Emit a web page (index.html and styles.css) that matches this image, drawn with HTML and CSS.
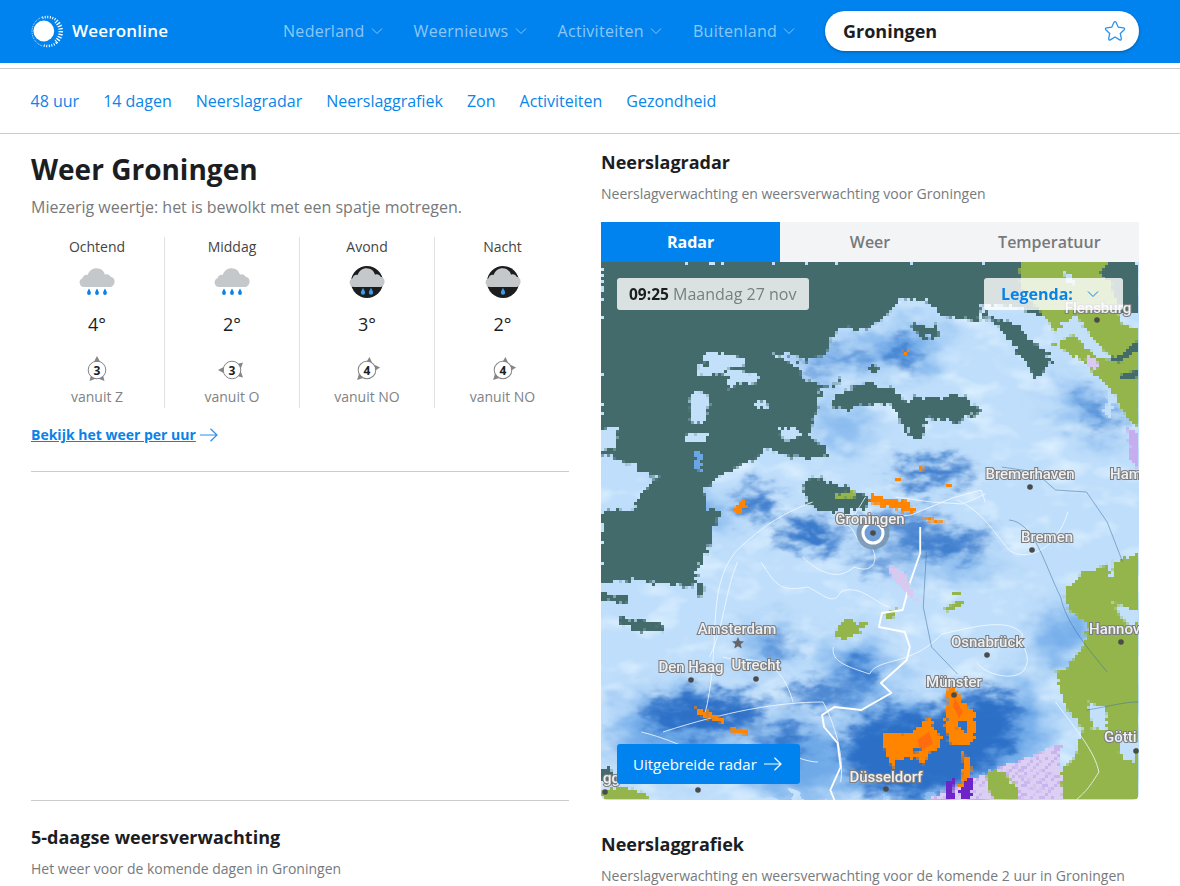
FILE: index.html
```html
<!DOCTYPE html>
<html lang="nl">
<head>
<meta charset="utf-8">
<title>Weer Groningen - Weeronline</title>
<link rel="stylesheet" href="styles.css">
</head>
<body>
<svg class="defs" width="0" height="0" aria-hidden="true">
  <defs>
    <symbol id="chev" viewBox="0 0 12 8"><path d="M1 1.500 6 6.500 11 1.500" fill="none" stroke="currentColor" stroke-width="1"/></symbol>
    <symbol id="arrow" viewBox="0 0 18 14"><path d="M0 7H17M10.500 .8 17 7 10.500 13.200" fill="none" stroke="currentColor" stroke-width="1.200"/></symbol>
    <path id="cloud" d="M5 287a4.500 4.500 0 0 1-1.500-8.700c.6-2.600 2.800-4 5.200-3.400C10 271 13.500 268.300 17.500 268.300c4.300 0 7.700 2.800 8.500 6.500 2-1 4.700-.2 5.600 2 2.300.3 4 2 4 4.600 0 3-2.200 5.600-5 5.600z" transform="translate(0 -263)" fill="#c5c8ca"/>
    <path id="drop" d="M0-3.500C1 -1.500 1.900-.4 1.900 1A1.900 1.900 0 0 1-1.900 1C-1.900-.4-1-1.500 0-3.500z" fill="#0a82e6"/>
    <path id="dropl" d="M0-3.800C1 -1.500 2.100-.4 2.100 1.200A2.100 2.100 0 0 1-2.100 1.200C-2.100-.4-1-1.500 0-3.800z" fill="#3d9bec"/>
    <symbol id="rain3" viewBox="0 0 36 36"><use href="#cloud"/><use href="#drop" x="10" y="29"/><use href="#drop" x="18" y="29"/><use href="#drop" x="26" y="29"/></symbol>
    <symbol id="night2" viewBox="0 0 36 36"><circle cx="18" cy="19" r="16" fill="#1c1d1f"/><use href="#cloud"/><use href="#dropl" x="14" y="28.500"/><use href="#dropl" x="22" y="28.500"/></symbol>
    <symbol id="night1" viewBox="0 0 36 36"><circle cx="18" cy="19" r="16" fill="#1c1d1f"/><use href="#cloud"/><use href="#dropl" x="18" y="28.500"/></symbol>
    <g id="wind"><circle r="8.800" fill="#fff" stroke="#858585" stroke-width="1"/><path d="M-3-8.300 0-14 3-8.300zM-7.500 11-6.200 6-1.500 8.800zM7.500 11 6.200 6 1.500 8.800z" fill="#858585"/></g>
    <pattern id="hatch" width="7" height="7" patternUnits="userSpaceOnUse" patternTransform="rotate(-40)">
      <rect width="7" height="7" fill="#dccff4"/><rect width="7" height="2" fill="#c9b4ee"/>
    </pattern>
    <filter id="rough" filterUnits="userSpaceOnUse" x="0" y="0" width="538" height="538" color-interpolation-filters="sRGB">
      <feTurbulence type="fractalNoise" baseFrequency=".16" numOctaves="2" seed="4" result="n"/>
      <feDisplacementMap in="SourceGraphic" in2="n" scale="11" xChannelSelector="R" yChannelSelector="G" result="d"/>
      <feFlood x="1" y="1" width="1" height="1" flood-color="#000"/>
      <feComposite x="0" y="0" width="3" height="3" operator="over"/>
      <feTile x="0" y="0" width="538" height="538" result="t"/>
      <feComposite in="d" in2="t" operator="in"/>
      <feMorphology operator="dilate" radius="1"/>
    </filter>
    <filter id="rough2" filterUnits="userSpaceOnUse" x="0" y="0" width="538" height="538" color-interpolation-filters="sRGB">
      <feTurbulence type="fractalNoise" baseFrequency=".3" numOctaves="2" seed="9" result="n"/>
      <feDisplacementMap in="SourceGraphic" in2="n" scale="7" xChannelSelector="R" yChannelSelector="G" result="d"/>
      <feFlood x="1" y="1" width="1" height="1" flood-color="#000"/>
      <feComposite x="0" y="0" width="3" height="3" operator="over"/>
      <feTile x="0" y="0" width="538" height="538" result="t"/>
      <feComposite in="d" in2="t" operator="in"/>
      <feMorphology operator="dilate" radius="1"/>
    </filter>
    <filter id="wash" filterUnits="userSpaceOnUse" x="0" y="0" width="538" height="538" color-interpolation-filters="sRGB">
      <feGaussianBlur in="SourceGraphic" stdDeviation="8" result="b"/>
      <feTurbulence type="fractalNoise" baseFrequency=".05 .09" numOctaves="3" seed="7" result="n"/>
      <feDisplacementMap in="b" in2="n" scale="38" xChannelSelector="R" yChannelSelector="G"/>
    </filter>
    <filter id="wash2" filterUnits="userSpaceOnUse" x="0" y="0" width="538" height="538" color-interpolation-filters="sRGB">
      <feGaussianBlur in="SourceGraphic" stdDeviation="13" result="b"/>
      <feTurbulence type="fractalNoise" baseFrequency=".03 .05" numOctaves="3" seed="21" result="n"/>
      <feDisplacementMap in="b" in2="n" scale="45" xChannelSelector="R" yChannelSelector="G"/>
    </filter>
    <filter id="mottle" x="0" y="0" width="100%" height="100%" color-interpolation-filters="sRGB"><feTurbulence type="fractalNoise" baseFrequency=".025 .045" numOctaves="3" seed="12"/><feColorMatrix values="0 0 0 0 .88  0 0 0 0 .95  0 0 0 0 1  2.400 0 0 0 -1.200"/></filter>
  </defs>
</svg>

<header class="topbar">
  <a class="brand" href="#">
    <svg class="brand-logo" width="36" height="36" viewBox="-17.300 -18.500 36 36" aria-hidden="true">
      <circle cx="-3.500" cy="-.5" r="10.400" fill="#fff"/>
      <g class="ring">
        <path class="ring-a" d="M8.680-10.340A13.500 13.500 0 0 1 8.680 10.340"/>
        <path class="ring-b" d="M-4.960-13.630A14.500 14.500 0 0 1 9.320-11.110M9.320 11.110A14.500 14.500 0 0 1-4.960 13.630"/>
        <path class="ring-c" d="M-5.230 14.380A15.300 15.300 0 0 1-5.230-14.380"/>
      </g>
    </svg>
    <span>Weeronline</span>
  </a>
  <nav class="mainnav">
    <a href="#">Nederland <svg class="chev" width="12" height="8"><use href="#chev"/></svg></a>
    <a href="#">Weernieuws <svg class="chev" width="12" height="8"><use href="#chev"/></svg></a>
    <a href="#">Activiteiten <svg class="chev" width="12" height="8"><use href="#chev"/></svg></a>
    <a href="#">Buitenland <svg class="chev" width="12" height="8"><use href="#chev"/></svg></a>
  </nav>
  <div class="search">
    <span>Groningen</span>
    <svg width="24" height="24" viewBox="0 0 24 24" aria-hidden="true"><path d="M12 2.600c.5 0 .8.300 1 .7l2.300 4.900 5.300.7c1 .1 1.300 1.200.6 1.900l-3.900 3.600 1 5.300c.2 1-.8 1.700-1.600 1.200L12 18l-4.700 2.900c-.8.500-1.800-.2-1.600-1.200l1-5.300-3.900-3.600c-.7-.7-.4-1.800.6-1.900l5.300-.7 2.300-4.900c.2-.4.500-.7 1-.7z" fill="none" stroke="#2b92ee" stroke-width="1.300"/></svg>
  </div>
</header>

<nav class="subnav">
  <a href="#">48 uur</a><a href="#">14 dagen</a><a href="#">Neerslagradar</a><a href="#">Neerslaggrafiek</a><a href="#">Zon</a><a href="#">Activiteiten</a><a href="#">Gezondheid</a>
</nav>

<main class="content">
  <section class="left">
    <h1>Weer Groningen</h1>
    <p class="summary">Miezerig weertje: het is bewolkt met een spatje motregen.</p>
    <div class="parts">
      <div class="part">
        <div class="part-name">Ochtend</div>
        <svg class="wx" width="36" height="36"><use href="#rain3"/></svg>
        <div class="temp">4°</div>
        <svg class="windicon" width="32" height="32" viewBox="-16 -16 32 32"><use href="#wind"/><text class="bft" y="4.500">3</text></svg>
        <div class="winddir">vanuit Z</div>
      </div>
      <div class="part">
        <div class="part-name">Middag</div>
        <svg class="wx" width="36" height="36"><use href="#rain3"/></svg>
        <div class="temp">2°</div>
        <svg class="windicon" width="32" height="32" viewBox="-16 -16 32 32"><use href="#wind" transform="rotate(-90)"/><text class="bft" y="4.500">3</text></svg>
        <div class="winddir">vanuit O</div>
      </div>
      <div class="part">
        <div class="part-name">Avond</div>
        <svg class="wx" width="36" height="36"><use href="#night2"/></svg>
        <div class="temp">3°</div>
        <svg class="windicon" width="32" height="32" viewBox="-16 -16 32 32"><use href="#wind" transform="rotate(-135)"/><text class="bft" y="4.500">4</text></svg>
        <div class="winddir">vanuit NO</div>
      </div>
      <div class="part">
        <div class="part-name">Nacht</div>
        <svg class="wx" width="36" height="36"><use href="#night1"/></svg>
        <div class="temp">2°</div>
        <svg class="windicon" width="32" height="32" viewBox="-16 -16 32 32"><use href="#wind" transform="rotate(-135)"/><text class="bft" y="4.500">4</text></svg>
        <div class="winddir">vanuit NO</div>
      </div>
    </div>
    <a class="morelink" href="#"><span>Bekijk het weer per uur</span><svg width="18" height="14"><use href="#arrow"/></svg></a>
    <div class="adslot"></div>
    <h2 class="h2-forecast">5-daagse weersverwachting</h2>
    <p class="sub">Het weer voor de komende dagen in Groningen</p>
  </section>

  <section class="right">
    <h2 class="h2-radar">Neerslagradar</h2>
    <p class="sub sub-radar">Neerslagverwachting en weersverwachting voor Groningen</p>
    <div class="tabs">
      <a class="tab active" href="#">Radar</a><a class="tab" href="#">Weer</a><a class="tab" href="#">Temperatuur</a>
    </div>
    <div class="map">
      <svg class="mapsvg" width="538" height="538" viewBox="0 0 538 538" role="img" aria-label="Neerslagradar kaart">
        <rect width="538" height="538" fill="#bfdefb"/>
        <rect width="538" height="538" filter="url(#mottle)"/>

        <g filter="url(#wash2)"><g transform="scale(1.033 1)" fill="#6ea9e8">
          <ellipse cx="232" cy="165" rx="34" ry="13"/>
          <ellipse cx="160" cy="385" rx="26" ry="16"/>
          <ellipse cx="250" cy="410" rx="32" ry="30"/>
          <ellipse cx="445" cy="375" rx="22" ry="30"/>
          <ellipse cx="470" cy="150" rx="40" ry="12" transform="rotate(38 470 150)"/>
          <ellipse cx="340" cy="300" rx="46" ry="10"/>
          <ellipse cx="90" cy="250" rx="34" ry="18"/>
          <ellipse cx="70" cy="470" rx="60" ry="34"/>
          <ellipse cx="190" cy="500" rx="46" ry="40"/>
          <ellipse cx="320" cy="490" rx="90" ry="46"/>
          <ellipse cx="405" cy="470" rx="24" ry="50"/>
          <ellipse cx="290" cy="85" rx="40" ry="20"/>
          <ellipse cx="225" cy="100" rx="30" ry="10"/>
        </g></g>
        <g filter="url(#wash)"><g transform="scale(1.033 1)" fill="#2c6fc6">
          <ellipse cx="290" cy="90" rx="12" ry="10"/>
          <ellipse cx="244" cy="95" rx="14" ry="6"/>
          <ellipse cx="208" cy="105" rx="13" ry="5"/>
          <ellipse cx="320" cy="210" rx="38" ry="11"/>
          <ellipse cx="290" cy="262" rx="44" ry="8"/>
          <ellipse cx="205" cy="272" rx="32" ry="13"/>
          <ellipse cx="330" cy="282" rx="48" ry="10"/>
          <ellipse cx="268" cy="300" rx="24" ry="6"/>
          <ellipse cx="305" cy="490" rx="72" ry="44"/>
          <ellipse cx="372" cy="462" rx="32" ry="36"/>
          <ellipse cx="100" cy="452" rx="60" ry="20"/>
          <ellipse cx="215" cy="432" rx="36" ry="9"/>
          <ellipse cx="172" cy="382" rx="14" ry="6"/>
          <ellipse cx="150" cy="240" rx="16" ry="13"/>
          <ellipse cx="175" cy="480" rx="28" ry="11"/>
          <ellipse cx="250" cy="410" rx="14" ry="12"/>
          <ellipse cx="480" cy="150" rx="22" ry="6" transform="rotate(38 480 150)"/>
        </g></g>

        <g filter="url(#rough)">
          <g transform="scale(1.033 1)" fill="#446b6b">
            <path d="M0 0H538V52L470 50 420 52 399 46 369 45 366 58 332 55 316 41 292 38 279 48 272 58 252 68 232 65 222 78 219 91 196 101 186 91 166 93 189 106 199 118 225 125 237 115 212 128 206 155 202 175 222 192 205 196 176 192 159 185 156 192 132 205 112 215 99 228 102 248 119 248 109 265 102 291 92 311 89 325 59 321 32 318 0 321V250L32 248 42 228 56 216 19 198 0 191z"/>
            <path d="M222 145 226 135 252 121 286 128 296 141 306 135 350 135 370 148 343 161 313 155 313 178 300 175 290 161 283 141 246 145 240 148z"/>
            <path d="M196 222 205 216 240 225 262 238 256 248 210 248 200 240z"/>
            <path d="M0 331 26 334 26 340 0 338zM19 355 35 358 62 362 60 370 30 368 19 362zM92 322 99 320 99 335 92 336z"/>
            <path d="M0 505 12 507 14 520 0 522z"/>
            <path d="M300 62 326 64 326 76 305 74zM259 102 268 104 268 112 260 112z"/>
          </g>
          <path fill="#446b6b" d="M379 50 419 65 439 87 452 97 436 117 422 97 399 67z"/>
        </g>

        <g filter="url(#rough2)">
          <path fill="#93b54c" d="M419 0H507L500 12 510 22 515 40 520 62 538 66V165L528 160 509 127 479 97 452 83 456 72 436 45 420 30z"/>
          <path fill="#446b6b" d="M538 78 516 95 506 96 519 101 538 88zM538 108 519 112 522 118 538 116z"/>
          <path fill="#c3e0fb" d="M474 53 489 73 511 97 496 95 471 72 454 83 450 76 462 62zM463 8 472 14 474 24 466 20zM505 140 512 146 510 156 502 150z"/>
          <g transform="scale(1.033 1)" fill="#93b54c">
            <path d="M538 290 521 291 466 311 449 328 452 348 472 361 469 381 452 405 439 411 452 448 466 465 459 495 446 508 442 538H538z"/>
            <path d="M0 530 22 525 35 528 50 538H0z"/>
            <path d="M226 374 232 360 245 356 248 362 258 362 248 372 236 378zM274 352 286 346 284 356 276 358z"/>
            <path d="M226 232 246 228 248 235 230 238zM332 346 350 338 352 342 336 350zM340 330 348 330 348 334 340 334z"/>
          </g>
        </g>
        <g filter="url(#rough2)"><g transform="scale(1.033 1)" fill="#c3e0fb">
          <path d="M490 128 498 130 500 142 490 140z"/>
          <path d="M500 470 520 480 516 500 504 495zM472 440 488 446 490 470 476 466z"/>
          <path d="M490 300 498 304 494 320zM496 340 520 350 516 372 504 356z"/>
          <path d="M100 90 118 90 139 97 138 104 112 105 99 98zM94 104 122 104 120 112 94 114z"/>
          <path d="M122 106 150 112 152 120 132 122 124 128 122 118z"/>
          <path d="M87 132 100 128 106 142 98 162 87 160 86 146zM81 172 104 170 103 180 82 180zM149 140 158 138 163 145 150 146z"/>
          <path d="M172 168 186 165 196 174 178 178 174 174zM0 166 16 165 14 186 0 188zM204 200 216 195 212 208 206 206z"/>
          <path d="M288 36 316 38 314 44 290 42zM366 42 400 44 412 50 404 52 372 50z"/>
        </g></g>
        <path filter="url(#rough2)" fill="#6aa6e6" d="M94 190 100 188 100 210 94 212z"/>

        <g transform="scale(1.033 1)">
          <g fill="none" stroke="#f3f9ff" stroke-linejoin="round" stroke-width=".9" opacity=".9">
            <path d="M228 254 252 258 300 253 340 236 368 228 372 240M345 238C370 250 380 270 395 288 410 300 440 290 452 250"/>
            <path d="M100 455C118 380 100 330 130 290 160 260 180 250 205 240"/>
            <path d="M155 300C170 325 175 330 200 325 215 332 225 345 232 330 250 320 270 345 280 345"/>
            <path d="M195 295C210 310 230 320 245 305 262 312 270 300 262 285 240 280 250 262 232 262"/>
            <path d="M225 385C222 400 240 405 260 412 268 395 300 405 330 372 360 365 395 355 408 372 405 385 420 395 408 410 395 420 368 410 364 400"/>
            <path d="M118 395C140 402 170 385 186 440M60 470C120 450 170 440 215 440 230 470 235 500 232 520"/>
            <path d="M39 470C80 480 100 500 120 490 170 480 190 500 210 500"/>
            <path d="M440 440C462 470 478 490 482 510 470 530 468 530 460 538M132 300C120 330 118 370 105 395"/>
            <path d="M285 235 320 240 350 242 372 232M256 235 246 252"/>
          </g>
          <path fill="none" stroke="#3f6f9a" stroke-width=".7" opacity=".7" d="M388 205 420 210 440 228 470 230 490 260 505 300M315 290 312 345 320 385 345 412M395 258C420 260 430 305 445 335 450 360 470 385 490 410M470 448C490 445 505 440 520 440"/>
          <path fill="none" stroke="#fff" stroke-width="1.800" stroke-linejoin="round" d="M309 265V291L299 321 292 348 272 351 269 365 294 370 299 385 296 398 282 411 271 421 281 431 252 448 226 445 214 453 216 465 229 481 232 505 222 528 226 538"/>
        </g>

        <g filter="url(#rough2)">
          <path d="M326 538 380 512 459 483 462 538z" fill="url(#hatch)"/>
          <path fill="#93b54c" d="M384 511 399 508 416 525 416 538 392 538z"/>
          <path d="M284 303 302 308 316 340 310 336 295 320z" fill="#d9c9f0"/>
          <path d="M526 165 538 172 538 208 530 200z" fill="#c4aef0"/>
          <path d="M484 92 498 100 496 108 486 104z" fill="#d8c9f0"/>
          <path fill="#ff8400" fill-rule="evenodd" d="M281 476 284 471 302 471 307 473 312 470 317 465 326 457 331 458 334 468 341 476 339 485 329 491 322 503 316 496 306 496 294 498 292 508 287 496 282 486zM321 483 316 491 313 490 318 482z"/>
          <path fill="#ff8400" fill-rule="evenodd" d="M344 426 356 428 362 440 374 451 374 478 366 484 356 483 349 483 346 470 344 451 347 438zM357 458 367 461 366 470 357 466z"/>
          <path fill="#ff8400" d="M361 488 371 501 369 511 367 528 359 528 362 508z"/>
          <path fill="#6d24c8" d="M346 518 353 518 352 538 346 538zM359 528 371 511 371 538 359 538z"/>
          <g transform="scale(1.033 1)" fill="#ff8400">
            <path d="M87 446 99 448 122 458 116 461 99 456 94 451zM126 465 144 468 142 473 127 471 126 469z"/>
            <path d="M261 232 280 238 296 238 303 248 294 250 275 245 262 241zM310 255 334 260 322 261zM129 244 141 238 138 249 131 253zM300 249 306 252 300 254z"/>
            <path d="M286 215 292 215 292 220 286 220zM330 222 338 222 337 225 331 225zM308 205 312 205 312 210 308 210zM294 88 298 88 298 92 294 92z"/>
          </g>
        </g>
        <path fill="#ff5a1e" opacity=".55" d="M316 478 328 470 332 482 320 488zM354 436 362 450 358 456 352 444z"/>

        <circle cx="272" cy="271" r="16.500" fill="#7693ad" opacity=".85"/>
        <circle cx="272" cy="271" r="11" fill="#6f9fd6"/>
        <circle cx="272" cy="271" r="10" fill="none" stroke="#fff" stroke-width="3"/>
        <circle cx="272" cy="271" r="2.800" fill="#4a4a4a"/>

        <g class="pins">
          <circle cx="496" cy="58" r="2.800"/><circle cx="429" cy="225" r="2.800"/><circle cx="431" cy="288" r="2.800"/>
          <circle cx="520" cy="380" r="2.800"/><circle cx="386" cy="393" r="2.800"/><circle cx="353" cy="433" r="2.800"/>
          <circle cx="155" cy="417" r="2.800"/><circle cx="90" cy="418" r="2.800"/><circle cx="285" cy="527" r="2.800"/>
          <circle cx="535" cy="489" r="2.800"/><circle cx="97" cy="528" r="2.800"/><circle cx="4" cy="530" r="2.800"/>
        </g>
        <path class="starpin" d="M137 375l1.700 4.100 4.400.3-3.400 2.900 1.100 4.300-3.800-2.300-3.800 2.300 1.100-4.300-3.400-2.900 4.400-.3z"/>
        <g class="cities">
          <text x="497" y="51" text-anchor="middle">Flensburg</text>
          <text x="429" y="217" text-anchor="middle">Bremerhaven</text>
          <text x="509" y="217">Ham</text>
          <text x="269" y="262" text-anchor="middle">Groningen</text>
          <text x="446" y="280" text-anchor="middle">Bremen</text>
          <text x="136" y="372" text-anchor="middle">Amsterdam</text>
          <text x="90" y="410" text-anchor="middle">Den Haag</text>
          <text x="155" y="408" text-anchor="middle">Utrecht</text>
          <text x="488" y="372">Hannov</text>
          <text x="386" y="385" text-anchor="middle">Osnabrück</text>
          <text x="353" y="425" text-anchor="middle">Münster</text>
          <text x="285" y="520" text-anchor="middle">Düsseldorf</text>
          <text x="503" y="480">Götti</text>
          <text x="2" y="521">gg</text>
        </g>
      </svg>

      <div class="chip timechip"><b>09:25</b> Maandag 27 nov</div>
      <div class="chip legend"><span>Legenda:</span><svg width="12" height="8"><use href="#chev"/></svg></div>
      <a class="radarbtn" href="#"><span>Uitgebreide radar</span><svg width="18" height="14"><use href="#arrow"/></svg></a>
    </div>
    <h2 class="h2-graph">Neerslaggrafiek</h2>
    <p class="sub">Neerslagverwachting en weersverwachting voor de komende 2 uur in Groningen</p>
  </section>
</main>
</body>
</html>
```

FILE: styles.css
```css
* { box-sizing: border-box; }
html, body { margin: 0; padding: 0; }
body {
  background: #fff;
  color: #1c1d1f;
  font-family: "Open Sans", "Liberation Sans", sans-serif;
  height: 886px;
  overflow: hidden;
}
a { text-decoration: none; color: inherit; }
.defs { position: absolute; }

.topbar {
  height: 63px;
  background: #0083ee;
  display: flex;
  align-items: center;
  padding: 0 41px 2px 30px;
}
.brand {
  display: flex;
  align-items: center;
  gap: 6px;
  color: #fff;
  font-size: 17px;
  font-weight: 600;
  letter-spacing: .2px;
  width: 253px;
}
.ring { fill: none; stroke: #fff; }
.ring-a { stroke-width: 4.500; stroke-dasharray: 1.300 1.500; }
.ring-b { stroke-width: 2.600; stroke-dasharray: 1 1.500; }
.ring-c { stroke-width: 1; stroke-dasharray: .8 1; }
.mainnav { display: flex; gap: 31px; flex: 1; font-size: 16px; letter-spacing: .3px; color: #8cc7f7; }
.mainnav a { display: flex; align-items: center; gap: 6px; white-space: nowrap; }
.chev { margin-top: 1px; }
.search {
  width: 314px;
  height: 40px;
  background: #fff;
  border-radius: 20px;
  box-shadow: 0 1px 3px rgba(0, 0, 0, .3);
  display: flex;
  align-items: center;
  justify-content: space-between;
  padding: 0 12px 0 18px;
  font-size: 18px;
  font-weight: 700;
}

.subnav {
  margin-top: 5px;
  height: 66px;
  border-top: 1px solid #c9cbcd;
  border-bottom: 1px solid #c9cbcd;
  padding: 0 30.500px;
  display: flex;
  align-items: center;
  gap: 24px;
  font-size: 16px;
  color: #0a85ea;
}

.content {
  display: grid;
  grid-template-columns: 538px 538px;
  column-gap: 32px;
  padding: 0 41px 0 31px;
}
h1 { margin: 14px 0 0; font-size: 28px; line-height: 42px; font-weight: 700; }
h2 { margin: 0; font-size: 18px; line-height: 26px; font-weight: 700; }
.sub { margin: 0; font-size: 14px; line-height: 20px; color: #777a7d; }
.summary { margin: 5px 0 0; font-size: 16px; line-height: 24px; color: #77797c; }

.parts { display: grid; grid-template-columns: repeat(4, 135px); margin: 18px 0 0 -1px; height: 171px; }
.part {
  display: flex;
  flex-direction: column;
  align-items: center;
  border-right: 1px solid #e0e1e2;
  font-size: 14px;
}
.part:last-child { border-right: 0; }
.part-name { line-height: 20px; color: #444; }
.wx { margin-top: 6px; display: block; }
.temp { margin-top: 12px; font-size: 18px; line-height: 26px; color: #1c1d1f; }
.windicon { margin-top: 17px; display: block; }
.bft { font-family: "Open Sans", sans-serif; font-size: 12px; font-weight: 700; text-anchor: middle; fill: #1c1d1f; }
.winddir { margin-top: 1px; line-height: 20px; color: #808285; }

.morelink {
  display: flex;
  align-items: center;
  gap: 4px;
  margin-top: 17px;
  line-height: 20px;
  font-size: 14px;
  font-weight: 700;
  color: #0a82e6;
}
.morelink span { text-decoration: underline; }
.morelink svg { color: #2f8fe6; }
.adslot {
  height: 330px;
  margin-top: 26px;
  border-top: 1px solid #c9cbcd;
  border-bottom: 1px solid #c9cbcd;
}
.h2-forecast { margin-top: 23px; }
.left .sub { margin-top: 9px; }

.h2-radar { margin-top: 15px; }
.sub-radar { margin-top: 9px; }
.tabs { display: grid; grid-template-columns: repeat(3, 1fr); margin-top: 18px; height: 40px; background: #f3f4f6; font-size: 16px; font-weight: 600; text-align: center; line-height: 41px; color: #77797c; }
.tab.active { background: #0083ee; color: #fff; font-weight: 700; }

.map { position: relative; width: 538px; height: 538px; border-radius: 0 0 6px 6px; overflow: hidden; }
.mapsvg { display: block; }
.pins { fill: #4b4b4b; }
.starpin { fill: #666; }
.cities text {
  font-family: Roboto, "Open Sans", sans-serif;
  font-size: 15px;
  font-weight: 500;
  fill: #f0f0f0;
  stroke: #7b7d80;
  stroke-width: 2.200px;
  paint-order: stroke;
}
.chip {
  position: absolute;
  top: 16px;
  height: 32px;
  border-radius: 3px;
  background: rgba(255, 255, 255, .8);
  display: flex;
  align-items: center;
  white-space: pre;
}
.timechip { left: 16px; width: 192px; padding-left: 12px; color: #7b7d80; font-size: 16px; }
.timechip b { color: #1c1d1f; font-weight: 700; font-size: 15.500px; }
.legend { right: 16px; width: 139px; padding-left: 17px; color: #0a82e6; font-size: 16px; font-weight: 700; gap: 14px; }
.radarbtn {
  position: absolute;
  left: 16px;
  bottom: 16px;
  width: 183px;
  height: 40px;
  border-radius: 3px;
  background: #0083ee;
  color: #fff;
  display: flex;
  align-items: center;
  gap: 7px;
  padding-left: 16px;
  font-size: 15px;
}
.h2-graph { margin-top: 31px; }
.right > .sub:last-child { margin-top: 9px; }
```
